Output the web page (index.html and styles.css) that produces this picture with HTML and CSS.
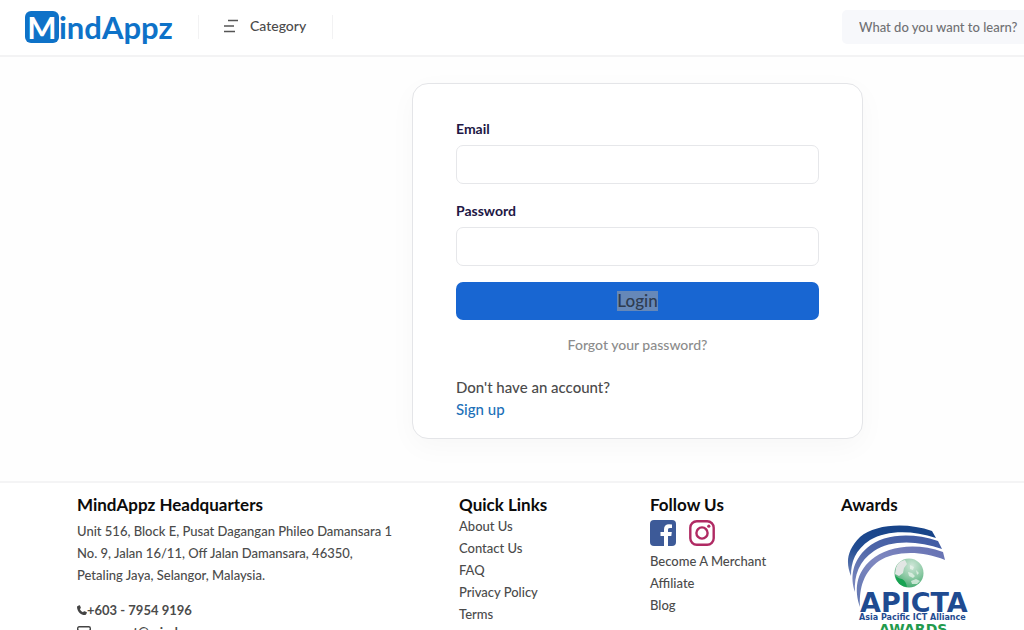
FILE: index.html
```html
<!DOCTYPE html>
<html lang="en">
<head>
<meta charset="utf-8">
<meta name="viewport" content="width=device-width, initial-scale=1">
<title>MindAppz – Login</title>
<link rel="stylesheet" href="styles.css">
</head>
<body>
<div class="page">
  <header class="topbar">
    <a class="logo" href="#"><span class="logo-mark">M</span><span class="logo-rest">indAppz</span></a>
    <button class="category" type="button">
      <svg class="category-icon" viewBox="0 0 14 14" aria-hidden="true"><path d="M4 1.5H14M0 7H10M0 12.5H11" /></svg>
      Category
    </button>
    <input class="search" type="search" placeholder="What do you want to learn?" aria-label="Search courses">
  </header>

  <main class="main">
    <form class="card">
      <div class="field">
        <label for="email">Email</label>
        <input id="email" type="email">
      </div>
      <div class="field">
        <label for="password">Password</label>
        <input id="password" type="password">
      </div>
      <button class="login" type="submit"><span class="login-text">Login</span></button>
      <a class="forgot" href="#">Forgot your password?</a>
      <div class="signup">
        <p>Don't have an account?</p>
        <a href="#">Sign up</a>
      </div>
    </form>
  </main>

  <footer class="footer">
    <section>
      <h2>MindAppz Headquarters</h2>
      <p class="address">Unit 516, Block E, Pusat Dagangan Phileo Damansara 1<br>No. 9, Jalan 16/11, Off Jalan Damansara, 46350,<br>Petaling Jaya, Selangor, Malaysia.</p>
      <p class="contact">
        <svg class="phone-icon" viewBox="0 0 10 10" aria-hidden="true"><path d="M.4 1.2 2.2.2Q2.7 0 3 .6L3.8 2.5Q4 3 3.5 3.4L2.8 4Q3.7 6.2 6 7.2L6.600 6.500Q7 6.100 7.500 6.300L9.500 7.100Q10 7.400 9.800 7.900L9 9.600Q8.800 10 8.200 10C3.500 9.900.1 6.300 0 1.900Q0 1.400.4 1.200Z" /></svg>+603 - 7954 9196
      </p>
      <p class="contact">
        <svg class="mail-icon" viewBox="0 0 14 12" aria-hidden="true"><rect x=".7" y=".7" width="12.6" height="10.600" rx="1.500" /><path d="M1 4 7 8 13 4" /></svg>support@mindappz.com
      </p>
    </section>
    <nav>
      <h2>Quick Links</h2>
      <ul class="links">
        <li><a href="#">About Us</a></li>
        <li><a href="#">Contact Us</a></li>
        <li><a href="#">FAQ</a></li>
        <li><a href="#">Privacy Policy</a></li>
        <li><a href="#">Terms</a></li>
      </ul>
    </nav>
    <section>
      <h2>Follow Us</h2>
      <div class="social">
        <a href="#" aria-label="Facebook"><svg viewBox="0 0 26 26"><rect width="26" height="26" rx="4" fill="#3d5a98" /><path fill="#fff" d="M14 26V16H10.500V12H14V9.200C14 5.900 16 4.200 19 4.200Q20.800 4.200 22 4.400V8H20C18.300 8 18 8.800 18 10V12H21.800L21.300 16H18V26Z" /></svg></a>
        <a href="#" aria-label="Instagram"><svg viewBox="0 0 26 26" fill="none" stroke="#b02a63" stroke-width="2.400"><rect x="1.300" y="1.300" width="23.400" height="23.400" rx="6.500" /><circle cx="13" cy="13" r="5.600" /><circle cx="19.800" cy="6.200" r="1.600" fill="#b02a63" stroke="none" /></svg></a>
      </div>
      <ul class="links">
        <li><a href="#">Become A Merchant</a></li>
        <li><a href="#">Affiliate</a></li>
        <li><a href="#">Blog</a></li>
      </ul>
    </section>
    <section>
      <h2>Awards</h2>
      <svg class="award" viewBox="0 0 130 120" role="img" aria-label="APICTA Awards">
        <defs>
          <linearGradient id="arc" x1="0" y1="1" x2=".4" y2="0"><stop offset="0" stop-color="#6f83b8" /><stop offset=".5" stop-color="#214c92" /><stop offset="1" stop-color="#174489" /></linearGradient>
          <linearGradient id="arc2" x1="0" y1="1" x2="1" y2="0"><stop offset="0" stop-color="#7f8bc0" /><stop offset=".5" stop-color="#4d65a8" /><stop offset="1" stop-color="#3f5aa3" /></linearGradient>
          <linearGradient id="arc3" x1="0" y1="1" x2="1" y2="0"><stop offset="0" stop-color="#5f75b0" /><stop offset=".5" stop-color="#7f88c0" /><stop offset="1" stop-color="#6470b2" /></linearGradient>
          <radialGradient id="globe" cx=".6" cy=".25" r=".85"><stop offset="0" stop-color="#cfe6d8" /><stop offset=".5" stop-color="#8cc9a4" /><stop offset="1" stop-color="#35a364" /></radialGradient>
        </defs>
        <path fill="url(#arc)" d="M10 52C5 40 5 27 19 13C34 0 66-2 91 7L95 14C71 6 46 6 29 16C14 26 10 38 10 52Z" />
        <path fill="url(#arc2)" d="M14 68C9 54 11 37 26 24C42 10 70 8 97 17L101 25C76 16 49 16 33 27C18 37 13 51 14 68Z" />
        <path fill="url(#arc3)" d="M19 83C13 66 15 49 30 36C46 22 75 18 102 28L104 36C80 26 53 27 38 37C23 48 18 63 19 83Z" />
        <circle cx="68" cy="49" r="14.500" fill="url(#globe)" />
        <path fill="#e2e6e4" d="M55 44Q57 37 64 36L66 40 63 44 62 49 58 52 54 50Z" />
        <path fill="#eef6f0" d="M69 41 73 43 72 46 69 45ZM67 48 71 49 74 52 72 54 68 52ZM75 46 78 49 76 51ZM70 57 75 55 79 57 76 60 71 60Z" opacity=".7" />
        <path d="M54 51Q56 54 61 55 65 57 66 63 56 62 54 51Z" fill="#18a352" />
        <text class="award-title" x="19" y="88">APICTA</text>
        <text class="award-sub" x="18" y="96">Asia Pacific ICT Alliance</text>
        <text class="award-name" x="38" y="110">AWARDS</text>
      </svg>
    </section>
  </footer>
</div>
</body>
</html>
```
FILE: styles.css
```css
* {
  box-sizing: border-box;
}

body {
  margin: 0;
  height: 100vh;
  overflow: hidden;
  background: #fefefe;
  color: #4b4b4b;
  font: 500 14px/22px Lato, "Noto Sans", sans-serif;
}

h2,
p,
ul {
  margin: 0;
  padding: 0;
}

a {
  color: inherit;
  text-decoration: none;
}

.page {
  min-width: 1275px;
}

.topbar {
  display: flex;
  align-items: center;
  height: 57px;
  padding: 0 0 2px 25px;
  border-bottom: 2px solid #f3f3f4;
  background: #fff;
}

.logo {
  display: flex;
  align-items: center;
  width: 173px;
  color: #0e72c8;
  font: 700 31px/32px Lato, sans-serif;
}

.logo-mark {
  width: 34px;
  border-radius: 6px;
  background: #0e72c8;
  color: #fff;
  text-align: center;
}

.category {
  display: flex;
  align-items: center;
  gap: 12px;
  width: 135px;
  height: 24px;
  padding: 0 25px 2px;
  border: solid #f2f2f3;
  border-width: 0 1px;
  background: none;
  color: #4b4b4b;
  font: 500 14px/22px Lato, sans-serif;
}

.category-icon {
  flex: none;
  width: 14px;
  height: 14px;
  fill: none;
  stroke: #555;
  stroke-width: 1.3;
}

.search {
  width: 433px;
  height: 34px;
  margin-left: auto;
  padding: 0 17px;
  border: 0;
  border-radius: 5px;
  background: #f7f8fb;
  color: #4b4b4b;
  font: 500 13px/22px Lato, sans-serif;
}

.search::placeholder {
  color: #707174;
  opacity: 1;
}

.main {
  display: flex;
  justify-content: center;
  padding: 26px 0 42px;
}

.card {
  display: flex;
  flex-direction: column;
  width: 451px;
  padding: 34px 43px 18px;
  border: 1px solid #e4e5e8;
  border-radius: 16px;
  background: #fff;
  box-shadow: 0 8px 28px rgba(0, 0, 0, 0.03);
}

.field {
  display: flex;
  flex-direction: column;
  gap: 5px;
  margin-bottom: 16px;
}

.field label {
  color: #211644;
  font-weight: 700;
}

.field input {
  height: 39px;
  padding: 0 12px;
  border: 1px solid #e6e7ea;
  border-radius: 7px;
  background: #fff;
  font: inherit;
}

.login {
  height: 38px;
  border: 0;
  border-radius: 7px;
  background: #1866d2;
  color: #2e3c50;
  font: 500 17px/20px Lato, sans-serif;
}

.login-text {
  display: inline-block;
  background: #6688b8;
}

.forgot {
  align-self: center;
  margin-top: 14px;
  color: #8c8c8c;
}

.signup {
  margin-top: 20px;
  font-size: 15px;
}

.signup a {
  color: #2070b8;
}

.footer {
  display: grid;
  grid-template-columns: 2fr 1fr 1fr 1fr 1fr;
  padding: 12px 52px 24px 77px;
  border-top: 2px solid #f4f4f5;
  background: #fff;
  font-size: 13px;
}

.footer h2 {
  color: #0b0b0b;
  font-size: 17px;
  font-weight: 700;
  line-height: 20px;
}

.address {
  margin: 5px 0 13px;
}

.contact {
  display: flex;
  align-items: center;
  font-weight: 700;
}

.phone-icon {
  width: 10px;
  height: 10px;
  fill: #444;
}

.mail-icon {
  width: 14px;
  height: 12px;
  margin-right: 2px;
  fill: none;
  stroke: #444;
  stroke-width: 1.4;
}

.links {
  list-style: none;
}

.social {
  display: flex;
  gap: 13px;
  padding: 5px 0 4px;
}

.social svg {
  display: block;
  width: 26px;
  height: 26px;
}

.award {
  display: block;
  width: 130px;
  height: 120px;
  margin-top: 9px;
}

.award-title {
  fill: #1f4b91;
  font: 700 27px "DejaVu Sans", sans-serif;
}

.award-sub {
  fill: #1f4b91;
  font: 700 8px "DejaVu Sans", sans-serif;
}

.award-name {
  fill: #229a4d;
  font: 700 14px "DejaVu Sans", sans-serif;
}
```
